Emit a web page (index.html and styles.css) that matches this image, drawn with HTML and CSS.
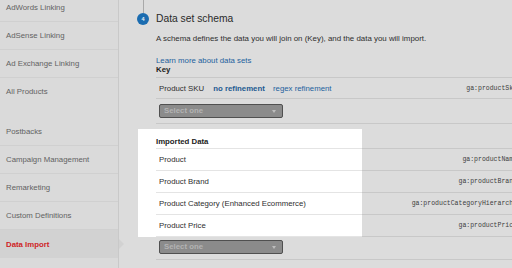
FILE: index.html
```html
<!DOCTYPE html>
<html lang="en">

<head>
    <meta charset="UTF-8">
    <meta name="viewport" content="width=device-width, initial-scale=1.0">
    <title>Data Import</title>
    <link rel="stylesheet" href="styles.css">
</head>

<body>
    <div class="page">
        <nav class="sidebar">
            <a href="#" class="nav-item">AdWords Linking</a>
            <a href="#" class="nav-item">AdSense Linking</a>
            <a href="#" class="nav-item">Ad Exchange Linking</a>
            <a href="#" class="nav-item nav-item-end">All Products</a>
            <a href="#" class="nav-item">Postbacks</a>
            <a href="#" class="nav-item">Campaign Management</a>
            <a href="#" class="nav-item">Remarketing</a>
            <a href="#" class="nav-item">Custom Definitions</a>
            <a href="#" class="nav-item active">Data Import</a>
        </nav>

        <main class="content">
            <div class="rail"></div>
            <div class="step-head">
                <span class="step-num">4</span>
                <h2>Data set schema</h2>
            </div>
            <div class="step-body">
                <p class="desc">A schema defines the data you will join on (Key), and the data you will import.</p>
                <a href="#" class="learn">Learn more about data sets</a>
                <div class="key-label">Key</div>

                <div class="schema-row key-row">
                    <div class="cell-label">Product SKU
                        <a href="#" class="refine active">no refinement</a>
                        <a href="#" class="refine">regex refinement</a>
                    </div>
                    <div class="cell-code">ga:productSku</div>
                </div>
                <div class="select-row">
                    <div class="select">Select one<span class="caret"></span></div>
                </div>

                <div class="imported">
                    <div class="schema-row head-row">
                        <div class="cell-label">Imported Data</div>
                        <div class="cell-code"></div>
                    </div>
                    <div class="schema-row data-row">
                        <div class="cell-label">Product</div>
                        <div class="cell-code">ga:productName</div>
                    </div>
                    <div class="schema-row data-row">
                        <div class="cell-label">Product Brand</div>
                        <div class="cell-code">ga:productBrand</div>
                    </div>
                    <div class="schema-row data-row">
                        <div class="cell-label">Product Category (Enhanced Ecommerce)</div>
                        <div class="cell-code">ga:productCategoryHierarchy</div>
                    </div>
                    <div class="schema-row data-row">
                        <div class="cell-label">Product Price</div>
                        <div class="cell-code">ga:productPrice</div>
                    </div>
                </div>
                <div class="select-row select-row-last">
                    <div class="select">Select one<span class="caret"></span></div>
                </div>
            </div>
        </main>
    </div>
</body>

</html>
```

FILE: styles.css
```css
html,
body {
    margin: 0;
    overflow: hidden;
    background-color: #dcdcdc;
}

body {
    font-family: "Liberation Sans", Arial, sans-serif;
    font-size: 7.8px;
    color: #2e2e2e;
}

.page {
    display: flex;
    width: 517px;
    height: 268px;
}

/* left navigation */
.sidebar {
    width: 118px;
    flex-shrink: 0;
    background-color: #dadada;
    border-right: 1px solid #c9c9c9;
    display: flex;
    flex-direction: column;
    margin-top: -6px;
}

.nav-item {
    display: block;
    height: 27px;
    line-height: 27px;
    padding-left: 6px;
    border-bottom: 1px solid #d0d0d0;
    color: #626262;
    text-decoration: none;
    position: relative;
}

.nav-item-end {
    border-bottom: none;
    margin-bottom: 13px;
}

.nav-item.active {
    height: 28px;
    line-height: 29px;
    background-color: #d2d2d2;
    color: #cf1f26;
    font-weight: bold;
    border-bottom: none;
}

.nav-item.active::after {
    content: "";
    position: absolute;
    right: -6px;
    top: 9px;
    border-top: 5px solid transparent;
    border-bottom: 5px solid transparent;
    border-left: 5px solid #d2d2d2;
}

/* main step */
.content {
    flex: 1;
    display: flex;
    flex-direction: column;
}

.rail {
    width: 1px;
    height: 13px;
    margin-left: 24px;
    background-color: #a9a9a9;
}

.step-head {
    display: flex;
    align-items: center;
    height: 12px;
}

.step-num {
    width: 12px;
    height: 12px;
    margin-left: 18px;
    border-radius: 50%;
    background-color: #1b6cb0;
    color: #e8eef5;
    font-size: 5.5px;
    font-weight: bold;
    line-height: 12px;
    text-align: center;
}

.step-head h2 {
    margin: 0 0 0 7px;
    font-size: 10.3px;
    font-weight: normal;
    line-height: 12px;
    color: #2a2a2a;
}

.step-body {
    margin-left: 37px;
    display: flex;
    flex-direction: column;
}

.desc {
    margin: 8px 0 0;
    font-size: 7.9px;
    line-height: 11px;
    color: #2e2e2e;
}

.learn {
    margin-top: 12px;
    line-height: 9px;
    color: #22619c;
    text-decoration: none;
}

.key-label {
    line-height: 9px;
    font-weight: bold;
    color: #222;
    margin-bottom: 3px;
}

/* schema rows */
.schema-row {
    display: flex;
    height: 21px;
    line-height: 21px;
}

.data-row {
    height: 22px;
}

.cell-label {
    width: 203px;
    padding-left: 3px;
    border-bottom: 1px solid #e4e4e4;
    white-space: nowrap;
}

.cell-code {
    flex: 1;
    border-bottom: 1px solid #c8c8c8;
    text-align: right;
    font-family: "Liberation Mono", "Courier New", monospace;
    font-size: 6.5px;
    color: #3c3c3c;
    white-space: nowrap;
}

.key-row {
    border-top: 1px solid #c8c8c8;
}

.key-row .cell-label {
    width: auto;
    flex: 1;
    border-bottom-color: #c8c8c8;
}

.key-row .cell-code {
    flex: none;
    padding-left: 8px;
}

.refine {
    margin-left: 6px;
    color: #22619c;
    text-decoration: none;
}

.refine.active {
    margin-left: 7px;
    font-weight: bold;
    color: #1c5a91;
}

.select-row {
    padding: 5px 0 5px 3px;
    border-bottom: 1px solid #c8c8c8;
}

.select-row-last {
    padding-top: 3px;
}

.select {
    position: relative;
    width: 118px;
    height: 12px;
    line-height: 12px;
    padding-left: 4px;
    background-color: #8b8b8b;
    border: 1px solid #505050;
    border-radius: 2px;
    color: #b3b3b3;
    font-weight: bold;
}

.caret {
    position: absolute;
    right: 6px;
    top: 5px;
    border-left: 2.5px solid transparent;
    border-right: 2.5px solid transparent;
    border-top: 3px solid #bdbdbd;
}

/* highlighted imported data block */
.imported {
    margin: 5px 0 0 -18px;
    padding: 6px 0 0 18px;
    background: linear-gradient(to right, #ffffff 224px, transparent 224px);
}

.head-row {
    height: 14px;
    line-height: 13px;
}

.head-row .cell-label {
    padding-left: 0;
    width: 206px;
    font-weight: bold;
    color: #222;
}
```
